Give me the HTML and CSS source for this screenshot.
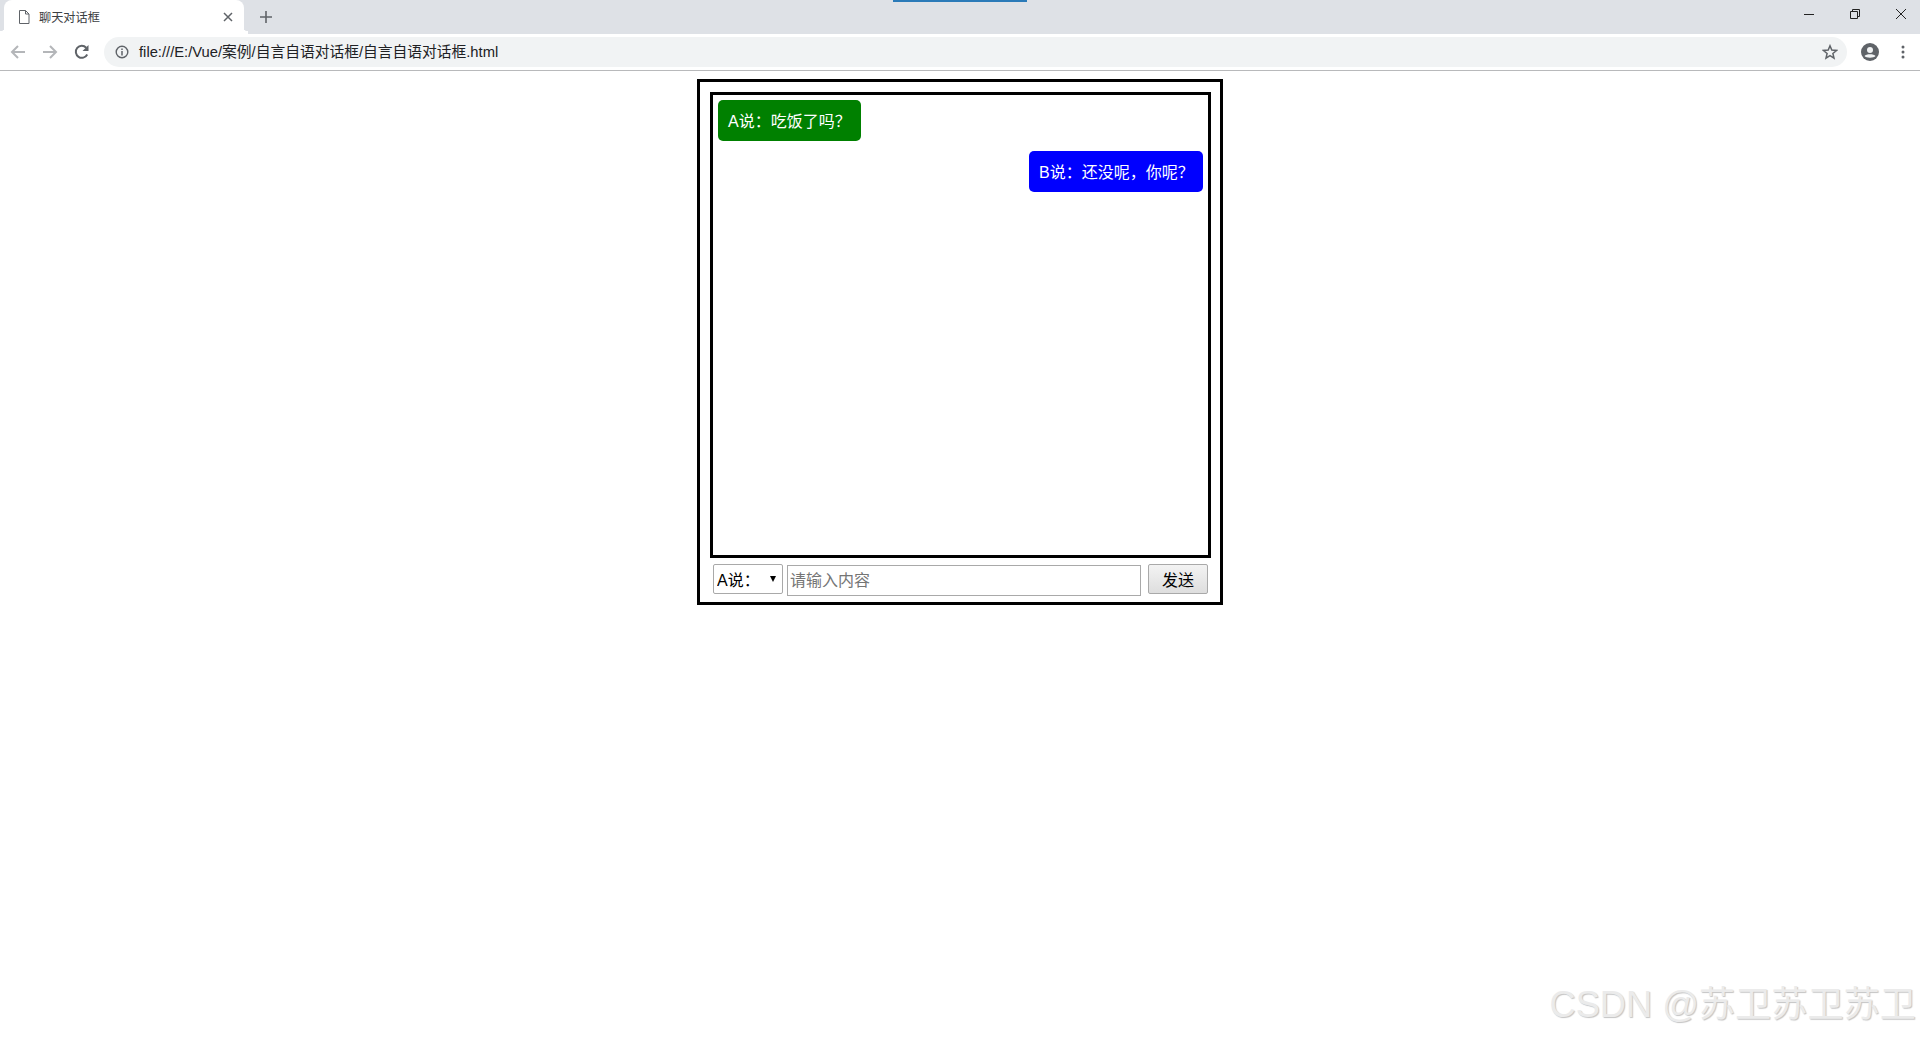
FILE: index.html
```html
<!DOCTYPE html>
<html lang="zh-CN">
<head>
<meta charset="utf-8">
<title>聊天对话框</title>
<link rel="stylesheet" href="styles.css">
</head>
<body>
<div class="top-marker"></div>
<header class="browser">
  <div class="tabstrip">
    <div class="tab">
      <svg class="tab-icon" width="12" height="14" viewBox="0 0 12 14"><path d="M1.500 .5h6l3.500 3.500v9.500h-9.500zM7.500 .5v3.500h3.500" fill="none" stroke="#5f6368" stroke-width="1"/></svg>
      <span class="tab-title">聊天对话框</span>
      <svg class="tab-close" width="10" height="10" viewBox="0 0 10 10"><path d="M1 1l8 8M9 1l-8 8" stroke="#5f6368" stroke-width="1.500"/></svg>
    </div>
    <svg class="new-tab" width="12" height="12" viewBox="0 0 12 12"><path d="M6 0v12M0 6h12" stroke="#5f6368" stroke-width="1.600"/></svg>
    <div class="window-controls">
      <svg width="10" height="10" viewBox="0 0 10 10"><path d="M0 5.500h10" stroke="#222" stroke-width="1"/></svg>
      <svg width="10" height="10" viewBox="0 0 10 10"><path d="M.5 2.500h7v7h-7zM2.500 2.500v-2h7v7h-2" fill="none" stroke="#222" stroke-width="1"/></svg>
      <svg width="10" height="10" viewBox="0 0 10 10"><path d="M0 0l10 10M10 0l-10 10" stroke="#222" stroke-width="1"/></svg>
    </div>
  </div>
  <div class="toolbar">
    <svg class="nav-icon" width="16" height="16" viewBox="0 0 16 16"><path d="M15 8H2M8 2L2 8l6 6" fill="none" stroke="#b4b6b9" stroke-width="2"/></svg>
    <svg class="nav-icon" width="16" height="16" viewBox="0 0 16 16"><path d="M1 8h13M8 2l6 6-6 6" fill="none" stroke="#b4b6b9" stroke-width="2"/></svg>
    <svg class="nav-icon" width="16" height="16" viewBox="0 0 16 16"><path d="M13.200 10.500A6 6 0 1 1 12.200 3.700" fill="none" stroke="#5f6368" stroke-width="2"/><path d="M14.500 1v6h-6z" fill="#5f6368"/></svg>
    <div class="omnibox">
      <svg class="info-icon" width="14" height="14" viewBox="0 0 14 14"><circle cx="7" cy="7" r="5.800" fill="none" stroke="#5f6368" stroke-width="1.400"/><path d="M7 6v4.500M7 3.500v1.500" stroke="#5f6368" stroke-width="1.500"/></svg>
      <span class="url">file:///E:/Vue/案例/自言自语对话框/自言自语对话框.html</span>
      <svg class="star" width="16" height="16" viewBox="0 0 16 16"><path d="M8 1.800l1.800 4.300 4.700.4-3.600 3 1.100 4.600L8 11.700l-4 2.400 1.100-4.600-3.600-3 4.700-.4z" fill="none" stroke="#5f6368" stroke-width="1.500"/></svg>
    </div>
    <svg class="avatar" width="18" height="18" viewBox="0 0 18 18"><circle cx="9" cy="9" r="9" fill="#5f6368"/><circle cx="9" cy="7" r="3" fill="#f1f3f4"/><path d="M3.500 13c1.500-2.200 9.500-2.200 11 0-1.500 2.200-9.500 2.200-11 0z" fill="#f1f3f4"/></svg>
    <svg class="menu" width="4" height="14" viewBox="0 0 4 14"><circle cx="2" cy="2" r="1.500" fill="#5f6368"/><circle cx="2" cy="7" r="1.500" fill="#5f6368"/><circle cx="2" cy="12" r="1.500" fill="#5f6368"/></svg>
  </div>
</header>
<main class="chat">
  <div class="messages">
    <div class="msg msg-a"><span class="bubble bubble-a">A说：吃饭了吗？</span></div>
    <div class="msg msg-b"><span class="bubble bubble-b">B说：还没呢，你呢？</span></div>
  </div>
  <form class="composer">
    <span class="who-wrap"><select class="who"><option>A说：</option><option>B说：</option></select></span>
    <input class="text" type="text" placeholder="请输入内容">
    <button class="send" type="button">发送</button>
  </form>
</main>
<div class="watermark">CSDN @苏卫苏卫苏卫</div>
</body>
</html>
```
FILE: styles.css
```css
* { box-sizing: border-box; }
html, body { margin: 0; height: 100%; }
body {
  position: relative;
  height: 1037px;
  overflow: hidden;
  background: #fff;
  font-family: "Liberation Sans", "Noto Sans CJK SC", sans-serif;
  color: #000;
}
.top-marker {
  position: absolute;
  left: 893px;
  top: 0;
  width: 134px;
  height: 2px;
  background: #2a7ab8;
}
.browser { border-bottom: 1px solid #b8b9bb; }
.tabstrip {
  display: flex;
  align-items: center;
  height: 34px;
  padding-left: 4px;
  background: #dee1e6;
}
.tab {
  position: relative;
  display: flex;
  align-items: center;
  width: 240px;
  height: 34px;
  padding: 0 11px 0 14px;
  background: #fff;
  border-radius: 8px 8px 0 0;
}
.tab::before,
.tab::after {
  content: "";
  position: absolute;
  bottom: 0;
  width: 4px;
  height: 8px;
}
.tab::before {
  left: -4px;
  background: radial-gradient(circle at 0 0, transparent 5px, #fff 5.500px);
}
.tab::after {
  right: -4px;
  background: radial-gradient(circle at 100% 0, transparent 5px, #fff 5.500px);
}
.tab-title {
  flex: 1;
  margin-left: 9px;
  margin-top: -1px;
  font-size: 12.200px;
  color: #3c4043;
}
.new-tab { margin-left: 16px; }
.window-controls {
  display: flex;
  gap: 36px;
  margin-left: auto;
  margin-top: -6px;
  padding-right: 14px;
}
.window-controls svg { display: block; }
.window-controls svg:first-child { margin-right: -1px; }
.window-controls svg:first-child + svg { margin-left: 1px; }
.toolbar {
  display: flex;
  align-items: center;
  height: 36px;
  padding-left: 10px;
  background: #fff;
}
.nav-icon { flex: none; margin-right: 16px; }
.nav-icon:nth-child(3) { margin-right: 14px; }
.omnibox {
  display: flex;
  align-items: center;
  width: 1743px;
  height: 30px;
  padding: 0 9px 0 11px;
  background: #f1f3f4;
  border-radius: 15px;
}
.url { flex: 1; margin-left: 10px; margin-top: -3px; font-size: 14.750px; color: #202124; }
.avatar { margin-left: 14px; }
.menu { margin-left: 22px; }
.chat {
  width: 526px;
  height: 526px;
  margin: 8px auto 0;
  padding: 10px 9px 0 10px;
  border: 3px solid #000;
}
.messages {
  height: 466px;
  padding: 5px;
  border: 3px solid #000;
  margin-bottom: 6px;
}
.msg { display: flex; margin-bottom: 10px; }
.msg-b { justify-content: flex-end; }
.bubble {
  display: block;
  height: 41px;
  padding: 1px 10px 0;
  border-radius: 5px;
  color: #fff;
  font-size: 16px;
  line-height: 41px;
  white-space: nowrap;
}
.bubble-a { background: #008000; }
.bubble-b { background: #0000ff; width: 174px; }
.composer { display: flex; align-items: flex-start; padding-left: 3px; }
.who-wrap { position: relative; display: block; width: 70px; height: 30px; }
.who-wrap::after {
  content: "";
  position: absolute;
  right: 7px;
  top: 12px;
  border-left: 3.500px solid transparent;
  border-right: 3.500px solid transparent;
  border-top: 6px solid #000;
  pointer-events: none;
}
.who {
  display: block;
  width: 70px;
  height: 30px;
  padding: 2px 0 0 3px;
  appearance: none;
  font: 16px "Liberation Sans", "Noto Sans CJK SC", sans-serif;
  background: #fff;
  border: 1px solid #a9a9a9;
  border-radius: 2px;
  color: #000;
}
.text {
  width: 354px;
  height: 31px;
  margin-top: 1px;
  margin-left: 4px;
  padding: 0 2px;
  font: 16px "Liberation Sans", "Noto Sans CJK SC", sans-serif;
  border: 1px solid #a9a9a9;
  outline: none;
}
.text::placeholder { color: #757575; }
.send {
  width: 60px;
  height: 30px;
  margin-left: 7px;
  padding: 0;
  font: 16px "Liberation Sans", "Noto Sans CJK SC", sans-serif;
  color: #000;
  background: linear-gradient(#f3f3f3, #dedede);
  border: 1px solid #a9a9a9;
  border-radius: 2px;
}
.watermark {
  position: absolute;
  right: 4px;
  bottom: 6px;
  font-size: 36.200px;
  line-height: 52px;
  white-space: nowrap;
  color: #ebebeb;
  text-shadow: 1px 1px 1px #c4c4c4;
}
```
